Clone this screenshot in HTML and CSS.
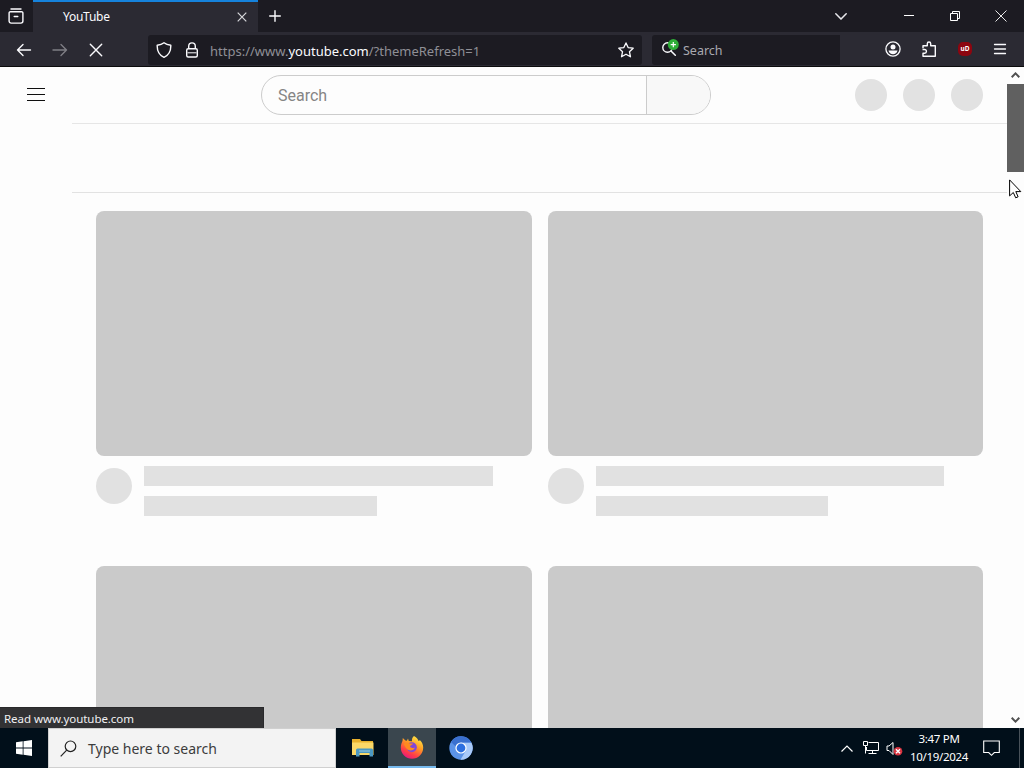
FILE: index.html
```html
<!DOCTYPE html>
<html lang="en">
<head>
  <meta charset="UTF-8" />
  <meta name="viewport" content="width=device-width, initial-scale=1.0"/>
  <title>YouTube</title>
  <link rel="stylesheet" href="styles.css">
</head>
<body>
  <!-- Tabs -->
  <div class="tab-bar">
    <div class="tab-view">
      <svg width="16" height="16" viewBox="0 0 16 16" fill="none" stroke="#fbfbfe" stroke-width="1.400" stroke-linecap="round">
        <path d="M3 1h10M2.500 3.700h11a1.400 1.400 0 0 1 1.400 1.400v8a2 2 0 0 1-2 2H3.100a2 2 0 0 1-2-2v-8a1.400 1.400 0 0 1 1.400-1.400zM6.200 8.500h3.600"/>
      </svg>
    </div>
    <div class="tab">
      <span class="tab-title">YouTube</span>
      <svg width="10" height="10" viewBox="0 0 10 10" stroke="#d8d8dc" stroke-width="1.200"><path d="M.7.7l8.600 8.600M9.300.7L.7 9.300"/></svg>
    </div>
    <div class="new-tab">
      <svg width="12" height="12" viewBox="0 0 12 12" stroke="#fbfbfe" stroke-width="1.400" stroke-linecap="round"><path d="M6 .7v10.600M.7 6h10.600"/></svg>
    </div>
    <div class="window-buttons">
      <svg class="list-tabs" width="12" height="7" viewBox="0 0 12 7" fill="none" stroke="#e8e8ec" stroke-width="1.500" stroke-linecap="round"><path d="M.8.8L6 6 11.200.8"/></svg>
      <svg class="minimize" width="10" height="10" viewBox="0 0 10 10" stroke="#fff"><path d="M0 4.500h10"/></svg>
      <svg class="restore" width="10" height="10" viewBox="0 0 10 10" fill="none" stroke="#fff"><path d="M.5 2.500h7v7h-7zM2.500 2.500v-2h7v7h-2"/></svg>
      <svg width="12" height="12" viewBox="0 0 12 12" stroke="#fff" stroke-width=".9"><path d="M.5.5l11 11M11.500.5l-11 11"/></svg>
    </div>
  </div>

  <!-- Toolbar -->
  <div class="nav-bar">
    <div class="nav-buttons">
      <svg width="16" height="16" viewBox="0 0 16 16" fill="none" stroke="#fbfbfe" stroke-width="1.400" stroke-linecap="round" stroke-linejoin="round"><path d="M14.500 8H1.500M7 2.500L1.500 8 7 13.500"/></svg>
      <svg class="disabled" width="16" height="16" viewBox="0 0 16 16" fill="none" stroke="#fbfbfe" stroke-width="1.400" stroke-linecap="round" stroke-linejoin="round"><path d="M1 8h13.500M9 2.500L14.500 8 9 13.500"/></svg>
      <svg width="16" height="16" viewBox="0 0 16 16" stroke="#fbfbfe" stroke-width="1.400" stroke-linecap="round"><path d="M2.300 2.300l11.400 11.400M13.700 2.300L2.300 13.700"/></svg>
    </div>
    <div class="url-bar">
      <svg width="16" height="16" viewBox="0 0 16 16" fill="none" stroke="#fbfbfe" stroke-width="1.400" stroke-linejoin="round"><path d="M8 .8C6 2.400 3.500 3 1.200 3.200 1 8.500 3 13 8 15.300 13 13 15 8.500 14.800 3.200 12.500 3 10 2.400 8 .8z"/></svg>
      <svg class="lock" width="16" height="16" viewBox="0 0 16 16" fill="none" stroke="#fbfbfe" stroke-width="1.400" stroke-linejoin="round"><rect x="2.700" y="6.700" width="10.600" height="8.300" rx="1.500"/><path d="M4.700 6.500V4.200a3.300 3.300 0 0 1 6.600 0v2.300"/><path d="M3.500 10.800h9" stroke-width="1"/></svg>
      <span class="url">https://www.<b>youtube.com</b>/?themeRefresh=1</span>
      <svg width="16" height="16" viewBox="0 0 16 16" fill="none" stroke="#fbfbfe" stroke-width="1.300" stroke-linejoin="round"><path d="M8 .9l2.150 4.700 5.050.6-3.750 3.450 1 5.100L8 12.250l-4.450 2.500 1-5.100L.8 6.200l5.050-.6z"/></svg>
    </div>
    <div class="search-bar">
      <svg width="18" height="18" viewBox="0 0 18 18" fill="none">
        <circle cx="6.500" cy="8.500" r="4.700" stroke="#fbfbfe" stroke-width="1.400"/>
        <path d="M10 12l4.300 4.300" stroke="#fbfbfe" stroke-width="1.500" stroke-linecap="round"/>
        <circle cx="12.300" cy="5.600" r="5.500" fill="#2fae38"/>
        <path d="M12.300 3v5.200M9.700 5.600h5.200" stroke="#fff" stroke-width="1.200"/>
      </svg>
      <span>Search</span>
    </div>
    <div class="toolbar-icons">
      <svg width="16" height="16" viewBox="0 0 16 16" fill="none"><circle cx="8" cy="8" r="7.100" stroke="#fbfbfe" stroke-width="1.300"/><circle cx="8" cy="6" r="2.500" fill="#fbfbfe"/><path d="M3.500 9.500h9c-.5 2.500-2.400 3.800-4.500 3.800S4 12 3.500 9.500z" fill="#fbfbfe"/></svg>
      <svg width="16" height="16" viewBox="0 0 16 16" fill="none" stroke="#fbfbfe" stroke-width="1.400" stroke-linejoin="round"><path d="M2 7.200V4.700h4.300V2.700a1.700 1.700 0 0 1 3.400 0v2h4.600v10.600H2v-3h1.700a1.700 1.700 0 0 0 1.700-1.700v-.4a1.700 1.700 0 0 0-1.700-1.700H1.500"/></svg>
      <span class="ublock">uD</span>
      <svg width="14" height="12" viewBox="0 0 14 12" stroke="#fbfbfe" stroke-width="1.300" stroke-linecap="round"><path d="M1.500 1.500h11M1.500 6h11M1.500 10.500h11"/></svg>
    </div>
  </div>

  <!-- Page -->
  <div class="viewport">
    <div class="page">
      <div class="masthead">
        <div class="guide-button"><i></i><i></i><i></i></div>
        <div class="search-box">
          <div class="search-input">Search</div>
          <div class="search-button"></div>
        </div>
        <div class="masthead-end"><i></i><i></i><i></i></div>
      </div>
      <div class="chips"></div>
      <div class="video-grid">
        <div class="video">
          <div class="thumbnail"></div>
          <div class="details">
            <div class="avatar"></div>
            <div class="lines"><div class="title-line"></div><div class="meta-line"></div></div>
          </div>
        </div>
        <div class="video">
          <div class="thumbnail"></div>
          <div class="details">
            <div class="avatar"></div>
            <div class="lines"><div class="title-line"></div><div class="meta-line"></div></div>
          </div>
        </div>
        <div class="video"><div class="thumbnail"></div></div>
        <div class="video"><div class="thumbnail"></div></div>
      </div>
    </div>
    <div class="scrollbar">
      <svg width="9" height="6" viewBox="0 0 9 6" fill="none" stroke="#505050" stroke-width="2"><path d="M.7 5.200l3.800-3.800 3.800 3.800"/></svg>
      <div class="scroll-thumb"></div>
      <svg width="9" height="6" viewBox="0 0 9 6" fill="none" stroke="#505050" stroke-width="2"><path d="M.7.8l3.800 3.800L8.300.8"/></svg>
    </div>
    <div class="status">Read www.youtube.com</div>
  </div>

  <!-- Windows taskbar -->
  <div class="taskbar">
    <div class="start">
      <svg width="16" height="16" viewBox="0 0 16 16" fill="#fff"><path d="M0 2.300L6.700 1.300v6.200H0zM7.500 1.200L16 0v7.500H7.500zM0 8.400h6.700v6.300L0 13.700zM7.500 8.400H16V16l-8.500-1.200z"/></svg>
    </div>
    <div class="taskbar-search">
      <svg width="17" height="17" viewBox="0 0 17 17" fill="none" stroke="#222" stroke-width="1.200"><circle cx="10.500" cy="6.300" r="5.300"/><path d="M6.700 10.100L.7 16.300"/></svg>
      <span>Type here to search</span>
    </div>
    <div class="app">
      <svg width="24" height="24" viewBox="0 0 24 24">
        <path d="M1 3h8l1.500 2H22v14H1z" fill="#e8b12d"/>
        <path d="M1 6.500h21.500V19H1z" fill="#fbd867"/>
        <path d="M5 14q0-1.500 1.500-1.500h14q1.500 0 1.500 1.500v6.500h-3.500V17h-10v3.500H5z" fill="#4b98c2"/>
        <path d="M8 15h11" stroke="#9dcbdd"/>
      </svg>
    </div>
    <div class="app active">
      <svg width="24" height="24" viewBox="0 0 24 24">
        <defs>
          <linearGradient id="fox" x1=".8" y1="0" x2=".25" y2="1"><stop offset="0" stop-color="#fff04a"/><stop offset=".4" stop-color="#ff9a24"/><stop offset=".75" stop-color="#ff3c48"/><stop offset="1" stop-color="#e31587"/></linearGradient>
        </defs>
        <path d="M14 1c3 1.500 4 3.500 4.500 5l1.500-.7c2 2 3.200 4.500 3.200 7.200A11.200 11.200 0 0 1 .8 12.500C.8 9.500 2 7 2.500 6l.3-3 2.600 2.500 1.500.2L8 3.500l.8 2.600 3.200.2C11.500 4 12.500 2 14 1z" fill="url(#fox)"/>
        <circle cx="11.800" cy="12.300" r="5" fill="#8147d8"/>
        <path d="M3.500 9c2-2 4.500-1.500 6.500-.5h3c-.5 1.500-2.500 1.500-3 3 1 1.500 3 2 5 1-1 3-5.500 4-8 1.500C5 12.500 5 10.500 3.500 9z" fill="#ff8a1f"/>
      </svg>
    </div>
    <div class="app">
      <svg width="24" height="24" viewBox="0 0 24 24">
        <circle cx="12" cy="12" r="11.700" fill="#5b93e8"/>
        <path d="M12 6.500h10.300A11.700 11.700 0 0 1 11.500 23.700l5.300-9z" fill="#a9caf9"/>
        <path d="M2 6a11.700 11.700 0 0 1 20.300.5H12a5.500 5.500 0 0 0-5.200 4z" fill="#3a70cf"/>
        <circle cx="12" cy="12" r="5.600" fill="#fff"/>
        <circle cx="12" cy="12" r="4.400" fill="#2c6fe0"/>
      </svg>
    </div>
    <div class="tray">
      <svg class="tray-arrow" width="12" height="7" viewBox="0 0 12 7" fill="none" stroke="#fff" stroke-width="1.200"><path d="M.5 6.500L6 1l5.500 5.500"/></svg>
      <svg class="network" width="17" height="14" viewBox="0 0 17 14" fill="none" stroke="#fff"><path d="M5.500 1.500h10v8h-12V6M9.500 9.500v3M5.500 12.500h8M.5.500h4v4h-4zM2.500 4.500v8"/></svg>
      <svg class="volume" width="17" height="15" viewBox="0 0 17 15" fill="none"><path d="M1 5h2l4-3.500v12L3 9.500H1z" stroke="#fff"/><circle cx="12" cy="10.300" r="4.300" fill="#d83440"/><path d="M10 8.300l4 4M14 8.300l-4 4" stroke="#fff" stroke-width="1.400"/></svg>
      <div class="clock"><span>3:47 PM</span><span>10/19/2024</span></div>
      <svg class="notifications" width="17" height="17" viewBox="0 0 17 17" fill="none" stroke="#fff" stroke-width="1.100"><path d="M.7 1h15.600v11.500h-5L8.500 15.300l-2.800-2.800h-5z"/></svg>
      <div class="show-desktop"></div>
    </div>
  </div>

  <svg class="cursor" width="13" height="20" viewBox="0 0 13 20"><path d="M.6.900v16l3.700-3.400 2.400 5.300 2.400-1-2.300-5.200h5z" fill="#fff" stroke="#000"/></svg>
</body>
</html>
```
FILE: styles.css
```css
* {
  box-sizing: border-box;
}
body {
  margin: 0;
  width: 1024px;
  height: 768px;
  overflow: hidden;
  display: flex;
  flex-direction: column;
  font-family: "Noto Sans", sans-serif;
  background: #fdfdfd;
}
svg {
  display: block;
  flex-shrink: 0;
}
.tab-bar {
  height: 32px;
  display: flex;
  background: #1c1b22;
}
.tab-view {
  width: 33px;
  display: flex;
  align-items: center;
  padding-left: 8px;
}
.tab {
  width: 225px;
  display: flex;
  align-items: center;
  justify-content: space-between;
  padding: 0 11px 1px 30px;
  background: #2b2a33;
  border-top: 2px solid #1683dd;
  color: #fbfbfe;
  font-size: 12px;
}
.tab-title {
  letter-spacing: -0.25px;
}
.new-tab {
  display: flex;
  align-items: center;
  padding-left: 11px;
}
.window-buttons {
  margin-left: auto;
  display: flex;
  align-items: center;
  padding-right: 17px;
}
.list-tabs {
  margin-right: 57px;
}
.minimize {
  margin-right: 36px;
}
.restore {
  margin-right: 35px;
}
.nav-bar {
  height: 35px;
  display: flex;
  align-items: center;
  padding-top: 2px;
  background: #2b2a33;
  border-bottom: 1px solid #0c0c0d;
}
.nav-buttons {
  width: 148px;
  display: flex;
  gap: 20px;
  padding-left: 16px;
}
.disabled {
  opacity: 0.4;
}
.url-bar {
  width: 494px;
  height: 30px;
  display: flex;
  align-items: center;
  padding: 0 8px 1px;
  background: #1c1b22;
  border-radius: 3px;
}
.lock {
  margin-left: 12px;
}
.url {
  flex: 1;
  margin-left: 10px;
  padding-top: 2px;
  font-size: 13px;
  color: #8f8f96;
}
.url b {
  font-weight: normal;
  color: #fbfbfe;
}
.search-bar {
  width: 188px;
  height: 30px;
  margin-left: 10px;
  display: flex;
  align-items: center;
  gap: 4px;
  padding-left: 9px;
  background: #1c1b22;
  border-radius: 3px 0 0 3px;
  color: #a9a9b0;
  font-size: 12.5px;
}
.search-bar svg {
  margin-top: -4px;
}
.toolbar-icons {
  margin-left: auto;
  display: flex;
  align-items: center;
  gap: 20px;
  padding-right: 17px;
}
.toolbar-icons svg {
  position: relative;
  left: -1px;
  margin-top: -2px;
}
.toolbar-icons svg:last-child {
  left: 0;
}
.ublock {
  width: 14px;
  height: 14px;
  margin: -3px 1px 0 0;
  border-radius: 5px;
  background: #8d0610;
  color: #fff;
  font-size: 6.5px;
  font-weight: bold;
  line-height: 13px;
  text-align: center;
}
.viewport {
  height: 661px;
  display: flex;
  position: relative;
  overflow: hidden;
}
.page {
  width: 1007px;
}
.masthead {
  height: 56px;
  display: flex;
  align-items: center;
}
.guide-button {
  display: flex;
  flex-direction: column;
  gap: 5px;
  margin: 0 0 2px 27px;
}
.guide-button i {
  width: 18px;
  height: 1px;
  background: #0f0f0f;
}
.search-box {
  width: 450px;
  height: 40px;
  display: flex;
  margin-left: 216px;
  border: 1px solid #cccccc;
  border-radius: 20px;
  overflow: hidden;
}
.search-input {
  width: 385px;
  padding-left: 16px;
  border-right: 1px solid #cccccc;
  color: #858585;
  font: 16px/39px Roboto, sans-serif;
}
.search-button {
  flex: 1;
  background: #f8f8f8;
}
.masthead-end {
  margin-left: auto;
  display: flex;
  gap: 16px;
  padding-right: 24px;
}
.masthead-end i {
  width: 32px;
  height: 32px;
  border-radius: 50%;
  background: #e2e2e2;
}
.chips {
  height: 70px;
  margin-left: 72px;
  border-top: 1px solid #e6e6e6;
  border-bottom: 1px solid #e2e2e2;
}
.video-grid {
  display: grid;
  grid-template-columns: 436px 435px;
  column-gap: 16px;
  row-gap: 50px;
  padding: 18px 0 0 96px;
}
.thumbnail {
  height: 245px;
  border-radius: 8px;
  background: #cacaca;
}
.details {
  height: 60px;
  display: flex;
  gap: 12px;
  padding-top: 10px;
}
.avatar {
  width: 36px;
  height: 36px;
  margin-top: 2px;
  border-radius: 50%;
  background: #e1e1e1;
}
.lines {
  flex: 1;
}
.title-line,
.meta-line {
  height: 20px;
  background: #e1e1e1;
}
.title-line {
  width: 90%;
  margin-bottom: 10px;
}
.meta-line {
  width: 60%;
}
.scrollbar {
  width: 17px;
  display: flex;
  flex-direction: column;
  align-items: center;
  padding: 5px 0;
  background: #fdfdfd;
}
.scrollbar svg:last-child {
  margin-top: auto;
}
.scroll-thumb {
  width: 17px;
  height: 88px;
  margin-top: 6px;
  background: #606060;
}
.status {
  position: absolute;
  left: 0;
  bottom: 0;
  width: 264px;
  height: 21px;
  padding-left: 4px;
  background: #323234;
  border-top: 1px solid #29292b;
  border-right: 1px solid #29292b;
  color: #f0f0f2;
  font-size: 11.5px;
  letter-spacing: -0.05px;
  line-height: 22px;
}
.taskbar {
  height: 40px;
  display: flex;
  background: #010f1a;
}
.start {
  width: 48px;
  display: flex;
  align-items: center;
  justify-content: center;
}
.taskbar-search {
  width: 288px;
  display: flex;
  align-items: center;
  gap: 11px;
  padding-left: 11px;
  background: #f3f3f3;
  border: 1px solid #d0d0d0;
  color: #3c3c3c;
  font-size: 14px;
}
.app {
  width: 48px;
  margin-right: 1px;
  display: flex;
  align-items: center;
  justify-content: center;
}
.taskbar-search + .app {
  margin-left: 3px;
}
.app.active {
  background: #3a464e;
  border-bottom: 2px solid #76b9ed;
}
.tray {
  margin-left: auto;
  display: flex;
  align-items: center;
  color: #fff;
}
.network {
  margin-left: 10px;
}
.volume {
  margin-left: 6px;
}
.clock {
  width: 64px;
  margin-left: 4px;
  display: flex;
  flex-direction: column;
  align-items: center;
  font-size: 11.5px;
  line-height: 18px;
  letter-spacing: -0.3px;
}
.notifications {
  margin-left: 12px;
}
.show-desktop {
  width: 5px;
  height: 40px;
  margin-left: 19px;
  border-left: 1px solid #49525a;
}
.cursor {
  position: absolute;
  left: 1009px;
  top: 179px;
}
```
